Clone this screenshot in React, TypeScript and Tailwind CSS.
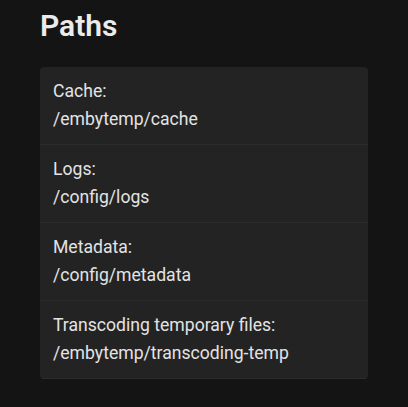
const paths = [
  { label: 'Cache:', value: '/embytemp/cache' },
  { label: 'Logs:', value: '/config/logs' },
  { label: 'Metadata:', value: '/config/metadata' },
  { label: 'Transcoding temporary files:', value: '/embytemp/transcoding-temp' },
]

export default function App() {
  return (
    <main
      className="min-h-[407px] bg-[#141414] px-10 pt-[4px] text-[#e3e3e3]"
      style={{ fontFamily: 'Roboto, "Liberation Sans", sans-serif' }}
    >
      <h1 className="text-[30px] font-semibold leading-[44px] text-[#ebebeb]">Paths</h1>
      <div className="mt-[19px] overflow-hidden rounded bg-[#232323]">
        {paths.map((p) => (
          <div key={p.label} className="border-b border-[#2c2c2c] pb-[11px] pl-[13px] pt-[10px] text-[17.6px] leading-[28px]">
            <div>{p.label}</div>
            <div>{p.value}</div>
          </div>
        ))}
      </div>
    </main>
  )
}
